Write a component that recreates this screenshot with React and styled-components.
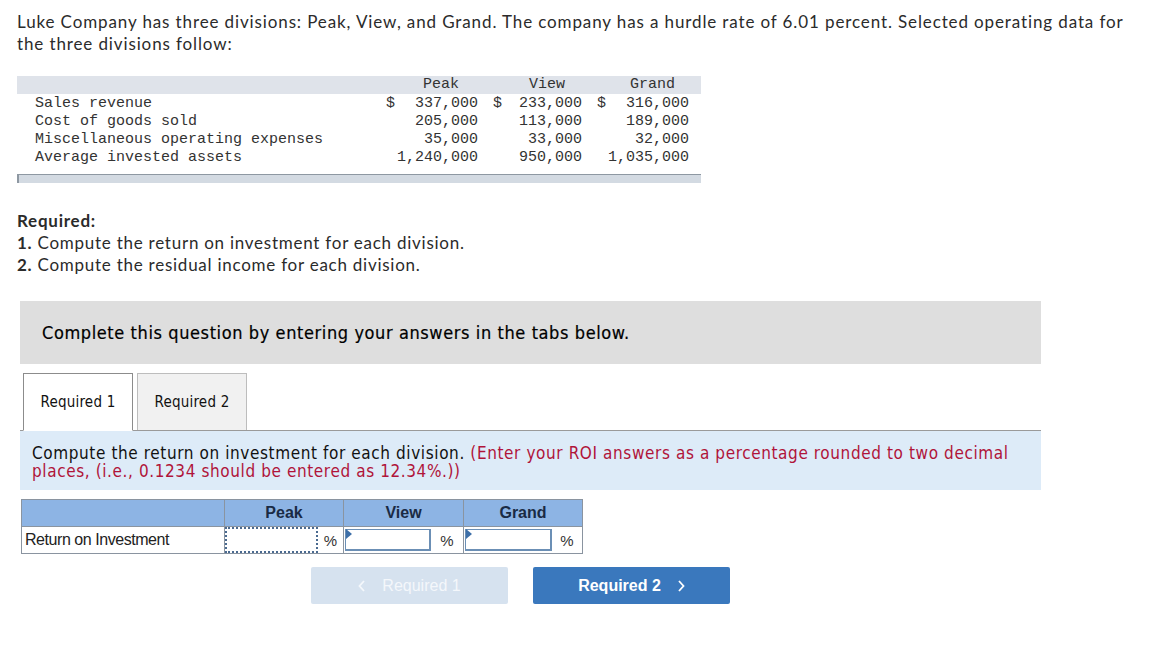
import React from "react";
import styled, { createGlobalStyle } from "styled-components";

const Global = createGlobalStyle`
  html, body { margin: 0; padding: 0; background: #fff; }
  body { font-family: Lato, "Open Sans", sans-serif; color: #333; }
`;

const Page = styled.div`
  width: 1167px;
  padding: 11px 0 0 17px;
  box-sizing: border-box;
`;

const Intro = styled.p`
  margin: 0;
  width: 1130px;
  font-family: Lato, sans-serif;
  font-size: 17px;
  line-height: 22px;
  letter-spacing: 0.88px;
  color: #2b2b2b;
`;

const DataWrap = styled.div`
  margin-top: 21px;
  width: 684px;
`;

const DataTable = styled.table`
  width: 684px;
  table-layout: fixed;
  border-collapse: collapse;
  font-family: "Liberation Mono", monospace;
  font-size: 15px;
  color: #333;
`;

const HeadRow = styled.tr`
  background: #dfe3ea;
`;

const DataRow = styled.tr``;

const C = styled.td`
  box-sizing: border-box;
  padding: ${(p) => (p.$head ? "0" : "2px")} ${(p) => p.$pr || 0}px 0 ${(p) => p.$pl || 0}px;
  height: 18px;
  line-height: ${(p) => (p.$head ? "18px" : "16px")};
  white-space: pre;
  overflow: visible;
  text-align: ${(p) => (p.$right ? "right" : "left")};
  width: ${(p) => (p.$w ? `${p.$w}px` : "auto")};
`;

const BottomBar = styled.div`
  margin-top: 8px;
  height: 8px;
  background: #d3dae2;
  border-top: 1px solid #8e98a2;
  border-left: 2px solid #8e98a2;
`;

const Required = styled.div`
  margin-top: 27px;
  font-family: Lato, sans-serif;
  font-size: 17px;
  line-height: 22px;
  letter-spacing: 0.75px;
  color: #2b2b2b;
  b { font-weight: 700; }
`;

const Panel = styled.div`
  margin-top: 25px;
  margin-left: 3px;
  width: 1021px;
  height: 63px;
  background: #dedede;
  display: flex;
  align-items: center;
  padding-left: 22px;
  box-sizing: border-box;
  font-family: "DejaVu Sans Condensed", "DejaVu Sans", sans-serif;
  font-size: 18px;
  letter-spacing: 0.6px;
  -webkit-text-stroke: 0.2px #000;
  color: #000;
`;

const Tabs = styled.div`
  margin-top: 9px;
  margin-left: 6px;
  display: flex;
  gap: 4px;
  height: 57px;
  position: relative;
  z-index: 1;
`;

const Tab = styled.div`
  width: 110px;
  box-sizing: border-box;
  border: 1px solid ${(p) => (p.$active ? "#8c8c8c" : "#bdbdbd")};
  border-bottom: ${(p) => (p.$active ? "1px solid #fff" : "none")};
  background: ${(p) => (p.$active ? "#fff" : "#f1f1f1")};
  display: flex;
  align-items: center;
  justify-content: center;
  font-family: "DejaVu Sans Condensed", "DejaVu Sans", sans-serif;
  font-size: 15px;
  letter-spacing: 0.2px;
  color: #111;
  height: ${(p) => (p.$active ? "58px" : "57px")};
`;

const Instr = styled.div`
  margin-left: 3px;
  width: 1021px;
  height: 60px;
  box-sizing: border-box;
  background: #ddebf8;
  border-top: 1px solid #9a9a9a;
  padding: 13px 12px 0;
  font-family: "DejaVu Sans Condensed", "DejaVu Sans", sans-serif;
  font-size: 17px;
  line-height: 18px;
  letter-spacing: 0.6px;
  color: #111;
`;

const Red = styled.span`
  color: #b0143a;
`;

const AnsTable = styled.table`
  margin-top: 9px;
  margin-left: 4px;
  border-collapse: collapse;
  font-family: "Liberation Sans", Arial, sans-serif;
  th, td { padding: 0; border: 1px solid #8a94a0; }
`;

const AnsHead = styled.th`
  background: #8db4e4;
  height: 26px;
  width: ${(p) => p.$w}px;
  font-size: 16px;
  font-weight: 700;
  color: #1a2b45;
  text-align: center;
`;

const RowLabel = styled.td`
  height: 26px;
  font-size: 16px;
  color: #222;
  padding-left: 3px !important;
  letter-spacing: -0.45px;
`;

const Cell = styled.td`
  height: 26px;
`;

const CellInner = styled.div`
  display: flex;
  align-items: center;
  height: 26px;
`;

const InputBox = styled.div`
  position: relative;
  width: ${(p) => p.$w}px;
  height: ${(p) => (p.$dotted ? "26px" : "22px")};
  margin-left: ${(p) => (p.$dotted ? "0" : "1px")};
  box-sizing: border-box;
  background: #fff;
  border: ${(p) => (p.$dotted ? "2px dotted #4a6a90" : "2px solid #6b8fb5")};
  border-top-width: ${(p) => (p.$dotted ? "2px" : "1px")};
  border-left-width: ${(p) => (p.$dotted ? "2px" : "1px")};
`;

const Flag = styled.span`
  position: absolute;
  left: 0;
  top: -1px;
  width: 0;
  height: 0;
  border-top: 5px solid transparent;
  border-bottom: 5px solid transparent;
  border-left: 6px solid #3d6fa8;
`;

const Pct = styled.span`
  flex: 1;
  text-align: center;
  font-size: 15px;
  color: #333;
`;

const Buttons = styled.div`
  margin-top: 13px;
  margin-left: 294px;
  display: flex;
  gap: 25px;
`;

const Btn = styled.div`
  width: 197px;
  height: 37px;
  border-radius: 2px;
  background: ${(p) => (p.$primary ? "#3a78bd" : "#d6e2ef")};
  color: ${(p) => (p.$primary ? "#fff" : "#f4f7fb")};
  font-family: "Liberation Sans", Arial, sans-serif;
  font-size: 16px;
  font-weight: ${(p) => (p.$primary ? 700 : 400)};
  display: flex;
  align-items: center;
  justify-content: center;
  gap: 16px;
`;

const Chev = ({ dir }) => (
  <svg width="8" height="12" viewBox="0 0 8 12">
    <path
      d={dir === "left" ? "M6 1 L1.5 6 L6 11" : "M2 1 L6.5 6 L2 11"}
      fill="none"
      stroke="currentColor"
      strokeWidth="1.8"
    />
  </svg>
);

const rows = [
  ["Sales revenue", "337,000", "233,000", "316,000", true],
  ["Cost of goods sold", "205,000", "113,000", "189,000"],
  ["Miscellaneous operating expenses", "35,000", "33,000", "32,000"],
  ["Average invested assets", "1,240,000", "950,000", "1,035,000"],
];

export default function App() {
  return (
    <>
      <Global />
      <Page>
        <Intro>
          Luke Company has three divisions: Peak, View, and Grand. The company has a hurdle rate of 6.01 percent. Selected operating data for the three divisions follow:
        </Intro>
        <DataWrap>
          <DataTable>
            <tbody>
              <HeadRow>
                <C $head $w={359}></C>
                <C $head $w={21}></C>
                <C $head $w={81} $right $pr={19}>Peak</C>
                <C $head $w={30}></C>
                <C $head $w={74} $right $pr={17}>View</C>
                <C $head $w={26}></C>
                <C $head $w={81} $right $pr={14}>Grand</C>
                <C $head $w={12}></C>
              </HeadRow>
              {rows.map((r) => (
                <DataRow key={r[0]}>
                  <C $pl={18}>{r[0]}</C>
                  <C $pl={10}>{r[4] ? "$" : ""}</C>
                  <C $right>{r[1]}</C>
                  <C $pl={15}>{r[4] ? "$" : ""}</C>
                  <C $right>{r[2]}</C>
                  <C $pl={15}>{r[4] ? "$" : ""}</C>
                  <C $right>{r[3]}</C>
                  <C></C>
                </DataRow>
              ))}
            </tbody>
          </DataTable>
          <BottomBar />
        </DataWrap>
        <Required>
          <b>Required:</b>
          <br />
          <b>1.</b> Compute the return on investment for each division.
          <br />
          <b>2.</b> Compute the residual income for each division.
        </Required>
        <Panel>Complete this question by entering your answers in the tabs below.</Panel>
        <Tabs>
          <Tab $active>Required 1</Tab>
          <Tab>Required 2</Tab>
        </Tabs>
        <Instr>
          Compute the return on investment for each division.{" "}
          <Red>
            (Enter your ROI answers as a percentage rounded to two decimal places, (i.e., 0.1234 should be entered as 12.34%.))
          </Red>
        </Instr>
        <AnsTable>
          <thead>
            <tr>
              <AnsHead $w={202}></AnsHead>
              <AnsHead $w={118}>Peak</AnsHead>
              <AnsHead $w={119}>View</AnsHead>
              <AnsHead $w={118}>Grand</AnsHead>
            </tr>
          </thead>
          <tbody>
            <tr>
              <RowLabel>Return on Investment</RowLabel>
              <Cell>
                <CellInner>
                  <InputBox $w={93} $dotted />
                  <Pct>%</Pct>
                </CellInner>
              </Cell>
              <Cell>
                <CellInner>
                  <InputBox $w={86}>
                    <Flag />
                  </InputBox>
                  <Pct>%</Pct>
                </CellInner>
              </Cell>
              <Cell>
                <CellInner>
                  <InputBox $w={87}>
                    <Flag />
                  </InputBox>
                  <Pct>%</Pct>
                </CellInner>
              </Cell>
            </tr>
          </tbody>
        </AnsTable>
        <Buttons>
          <Btn>
            <Chev dir="left" />
            Required 1
          </Btn>
          <Btn $primary>
            Required 2
            <Chev dir="right" />
          </Btn>
        </Buttons>
      </Page>
    </>
  );
}
